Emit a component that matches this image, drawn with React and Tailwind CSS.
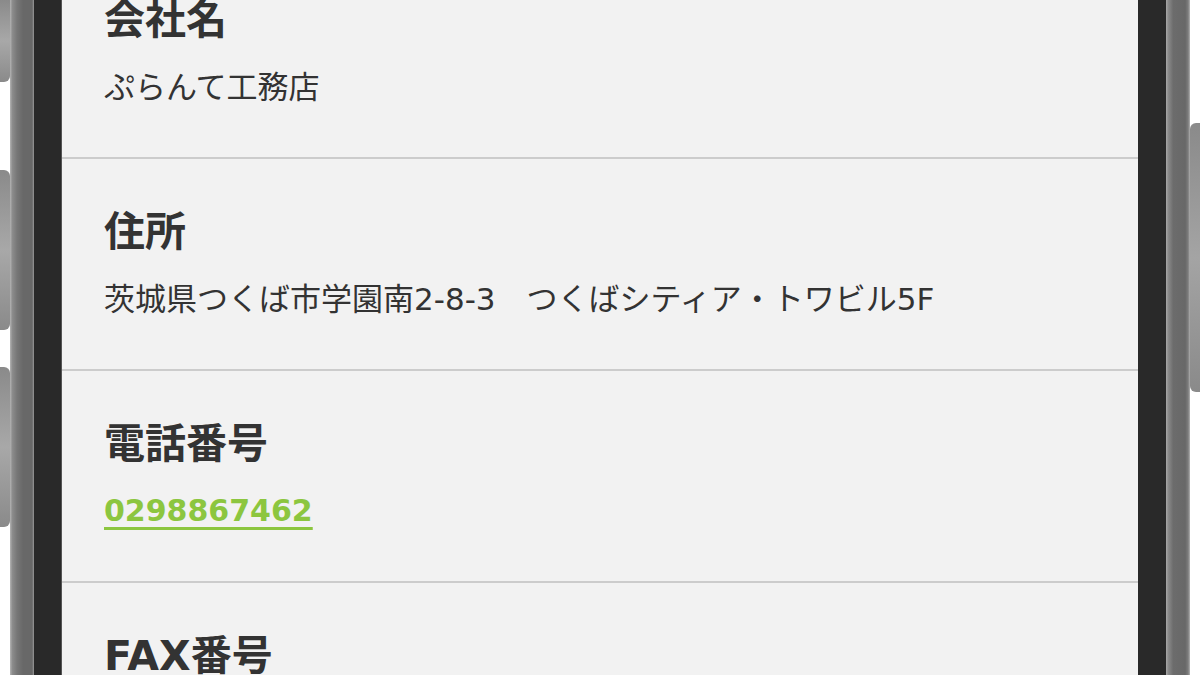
import React from 'react';

const rows = [
  { label: '会社名', value: 'ぷらんて工務店' },
  { label: '住所', value: '茨城県つくば市学園南2-8-3　つくばシティア・トワビル5F' },
  { label: '電話番号', value: '0298867462', tel: true },
  { label: 'FAX番号', value: '0298867463' },
];

function SideButton({ className }) {
  return (
    <div
      className={`w-[10px] rounded-r-[6px] bg-[linear-gradient(to_bottom,#8a8a8a,#a8a8a8_50%,#8a8a8a)] ${className}`}
    />
  );
}

export default function App() {
  return (
    <div className="w-[1200px] h-[675px] overflow-hidden bg-white flex font-['DejaVu_Sans','Noto_Sans_CJK_JP',sans-serif]">
      {/* left buttons */}
      <div className="w-[10px] flex flex-col shrink-0">
        <SideButton className="h-[82px] rounded-tr-none" />
        <SideButton className="h-[160px] mt-[88px]" />
        <SideButton className="h-[160px] mt-[37px]" />
      </div>

      {/* left bezel */}
      <div className="w-[24px] shrink-0 bg-[linear-gradient(to_right,#b4b4b4,#8c8c8c_10%,#767676_30%,#686868_55%,#686868_92%,#9a9a9a)]" />
      <div className="w-[28px] shrink-0 bg-[#292929] border-r border-[#555]" />

      {/* screen */}
      <div className="w-[1076px] shrink-0 bg-[#f2f2f2] overflow-hidden">
        <div className="mt-[-53px]">
          {rows.map((r) => (
            <div key={r.label} className="pl-[42px] pt-[43px] pb-[47px] border-b-2 border-[#cccccc]">
              <h2 className="text-[41px] leading-[60px] font-bold text-[#333333]">{r.label}</h2>
              {r.tel ? (
                <a className="block mt-[14px] text-[30px] leading-[46px] font-bold text-[#8cc63f] underline underline-offset-[6px] decoration-[3px]">
                  {r.value}
                </a>
              ) : (
                <p className="mt-[14px] text-[31px] leading-[46px] text-[#333333]">{r.value}</p>
              )}
            </div>
          ))}
        </div>
      </div>

      {/* right bezel */}
      <div className="w-[28px] shrink-0 bg-[#292929]" />
      <div className="w-[24px] shrink-0 bg-[linear-gradient(to_right,#a8a8a8,#8a8a8a_10%,#6c6c6c_30%,#686868_80%,#7c7c7c_92%,#b0b0b0)]" />

      {/* right button */}
      <div className="w-[10px] shrink-0 flex flex-col">
        <div className="mt-[123px] h-[269px] w-[10px] rounded-l-[6px] bg-[linear-gradient(to_bottom,#8a8a8a,#a4a4a4_50%,#8a8a8a)]" />
      </div>
    </div>
  );
}
